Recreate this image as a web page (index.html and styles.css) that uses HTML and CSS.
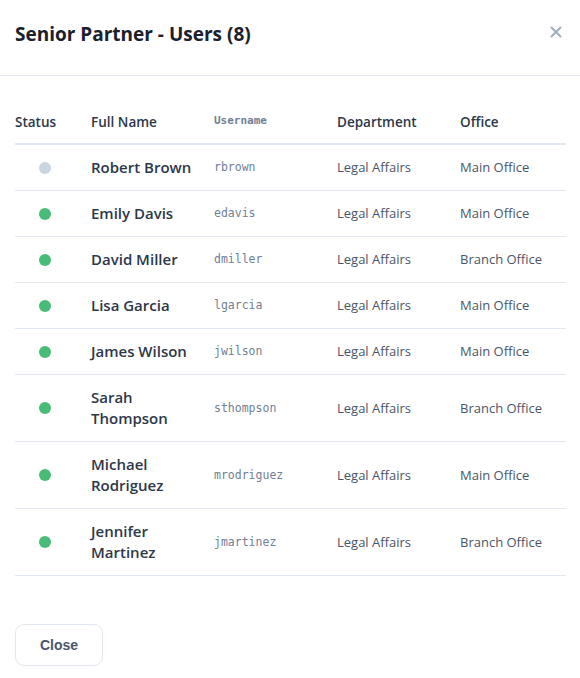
FILE: index.html
```html
<!DOCTYPE html>
<html lang="en">
<head>
<meta charset="utf-8">
<title>Senior Partner - Users</title>
<link rel="stylesheet" href="styles.css">
</head>
<body>
<div class="modal">
  <header class="modal-header">
    <h2 class="modal-title">Senior Partner - Users (8)</h2>
    <button class="icon-close" aria-label="Close">
      <svg width="12" height="12" viewBox="0 0 12 12"><path d="M1.5 1.5L10.5 10.5M10.5 1.5L1.5 10.5" stroke="#a0aec0" stroke-width="2" stroke-linecap="round"/></svg>
    </button>
  </header>
  <div class="modal-body">
    <table class="users">
      <colgroup>
        <col class="c-status"><col class="c-name"><col class="c-user"><col class="c-dept"><col>
      </colgroup>
      <thead>
        <tr><th>Status</th><th>Full Name</th><th class="mono-h">Username</th><th>Department</th><th>Office</th></tr>
      </thead>
      <tbody>
        <tr><td><span class="dot off"></span></td><td class="name">Robert Brown</td><td class="mono">rbrown</td><td class="muted">Legal Affairs</td><td class="muted">Main Office</td></tr>
        <tr><td><span class="dot on"></span></td><td class="name">Emily Davis</td><td class="mono">edavis</td><td class="muted">Legal Affairs</td><td class="muted">Main Office</td></tr>
        <tr><td><span class="dot on"></span></td><td class="name">David Miller</td><td class="mono">dmiller</td><td class="muted">Legal Affairs</td><td class="muted">Branch Office</td></tr>
        <tr><td><span class="dot on"></span></td><td class="name">Lisa Garcia</td><td class="mono">lgarcia</td><td class="muted">Legal Affairs</td><td class="muted">Main Office</td></tr>
        <tr><td><span class="dot on"></span></td><td class="name">James Wilson</td><td class="mono">jwilson</td><td class="muted">Legal Affairs</td><td class="muted">Main Office</td></tr>
        <tr><td><span class="dot on"></span></td><td class="name">Sarah Thompson</td><td class="mono">sthompson</td><td class="muted">Legal Affairs</td><td class="muted">Branch Office</td></tr>
        <tr><td><span class="dot on"></span></td><td class="name">Michael Rodriguez</td><td class="mono">mrodriguez</td><td class="muted">Legal Affairs</td><td class="muted">Main Office</td></tr>
        <tr><td><span class="dot on"></span></td><td class="name">Jennifer Martinez</td><td class="mono">jmartinez</td><td class="muted">Legal Affairs</td><td class="muted">Branch Office</td></tr>
      </tbody>
    </table>
  </div>
  <footer class="modal-footer">
    <button class="btn">Close</button>
  </footer>
</div>
</body>
</html>
```
FILE: styles.css
```css
* { box-sizing: border-box; }
html, body { margin: 0; background: #fff; }
body {
  font-family: "Open Sans", "Noto Sans", sans-serif;
  color: #2d3748;
}
.modal { width: 580px; }
.modal-header {
  display: flex;
  align-items: center;
  justify-content: space-between;
  padding: 0 18px 0 15px;
  height: 76px;
  border-bottom: 1px solid #e2e8f0;
}
.modal-title {
  margin: 0 0 8px;
  font-size: 19px;
  line-height: 24px;
  font-weight: 700;
  color: #1a202c;
}
.icon-close {
  border: 0;
  background: none;
  padding: 0;
  margin-bottom: 12px;
  display: flex;
  cursor: pointer;
}
.modal-body { padding: 25px 14px 23px 15px; }
.users {
  width: 100%;
  border-collapse: collapse;
  table-layout: fixed;
}
.c-status { width: 76px; }
.c-name { width: 123px; }
.c-user { width: 123px; }
.c-dept { width: 123px; }
.users th {
  text-align: left;
  font-size: 13.5px;
  font-weight: 600;
  line-height: 20px;
  color: #2d3748;
  padding: 11px 10px 11px 0;
  border-bottom: 2px solid #e2e8f0;
  vertical-align: middle;
}
.users th.mono-h {
  font-family: "DejaVu Sans Mono", "Liberation Mono", monospace;
  font-size: 11px;
  font-weight: 600;
  color: #718096;
  vertical-align: top;
  padding-top: 10px;
}
.users td {
  padding: 12px 14px 12px 0;
  border-bottom: 1px solid #e2e8f0;
  vertical-align: middle;
  font-size: 13px;
  line-height: 21px;
}
.users td.name {
  font-size: 15px;
  font-weight: 600;
  color: #2d3748;
}
.users td.mono {
  font-family: "DejaVu Sans Mono", "Liberation Mono", monospace;
  font-size: 11.5px;
  color: #718096;
}
.users td.muted { color: #4a5568; }
.dot {
  display: block;
  width: 12px;
  height: 12px;
  border-radius: 50%;
  margin-left: 24px;
}
.dot.on { background: #48bb78; }
.dot.off { background: #cbd5e0; }
.modal-footer { padding: 25px 15px 13px; }
.btn {
  font-family: "Liberation Sans", Arial, sans-serif;
  font-size: 14px;
  font-weight: 700;
  color: #4a5568;
  background: #fff;
  border: 1px solid #e2e8f0;
  border-radius: 9px;
  width: 88px;
  height: 42px;
  padding: 0;
}
```
